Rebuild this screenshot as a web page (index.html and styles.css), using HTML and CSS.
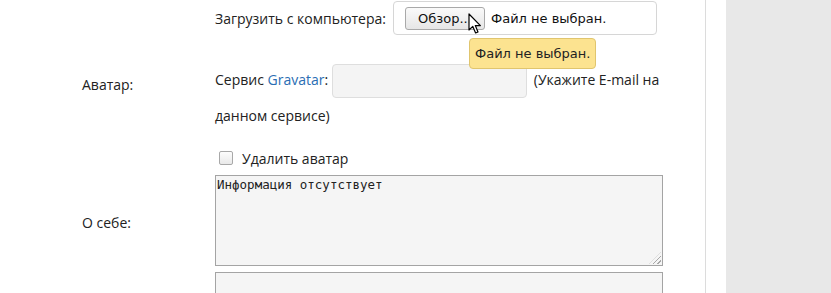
FILE: index.html
```html
<!DOCTYPE html>
<html lang="ru">
<head>
<meta charset="utf-8">
<link rel="stylesheet" href="styles.css">
</head>
<body>
<div class="page">
  <div class="main">
    <div class="form">
      <div class="label avatar-label">Аватар:</div>
      <div class="field avatar-field">
        <div class="upload-row">
          <span class="upload-text">Загрузить с компьютера:</span>
          <span class="file-box">
            <span class="file-btn">Обзор...</span>
            <span class="file-name">Файл не выбран.</span>
            <span class="tooltip">Файл не выбран.</span>
            <svg class="cursor" width="14" height="22" viewBox="0 0 14 22"><path d="M1 1 L1 17 L4.8 13.4 L7.6 20 L10 19 L7.3 12.6 L12.4 12.6 Z" fill="#fff" stroke="#000" stroke-width="1.2" stroke-linejoin="round"/></svg>
          </span>
        </div>
        <p class="gravatar">Сервис <a href="#" class="link">Gravatar</a>:<input class="text-input" type="text"> (Укажите E-mail на данном сервисе)</p>
        <label class="check-row"><span class="checkbox"></span>Удалить аватар</label>
      </div>
      <div class="label about-label">О себе:</div>
      <div class="field">
        <div class="textarea">Информация отсутствует<span class="grip"></span></div>
      </div>
      <div class="label"></div>
      <div class="field">
        <div class="textarea next"></div>
      </div>
    </div>
  </div>
  <div class="gap"></div>
  <div class="sidebar"></div>
</div>
</body>
</html>
```
FILE: styles.css
```css
html, body {
  margin: 0;
  padding: 0;
  background: #fff;
}
body {
  font-family: "Open Sans", "DejaVu Sans", sans-serif;
  font-size: 14px;
  color: #222;
  overflow: hidden;
  height: 293px;
}
.page {
  display: flex;
  height: 293px;
}
.main {
  width: 706px;
  border-right: 1px solid #dcdcdc;
  box-sizing: border-box;
}
.gap {
  width: 20px;
}
.sidebar {
  flex: 1;
  background: #e8e8e8;
}
.form {
  display: grid;
  grid-template-columns: 133px 452px;
  padding-left: 82px;
  padding-top: 1px;
}
.label {
  display: flex;
  align-items: center;
}
.avatar-label {
  padding-top: 1px;
}
.about-label {
  padding-top: 12px;
}
.upload-row {
  display: flex;
  align-items: center;
  height: 34px;
}
.upload-text {
  margin-right: 7px;
}
.file-box {
  position: relative;
  display: flex;
  align-items: center;
  width: 264px;
  height: 34px;
  box-sizing: border-box;
  border: 1px solid #d6d6d6;
  border-radius: 4px;
  padding-left: 11px;
  font-family: "DejaVu Sans", sans-serif;
  font-size: 13px;
  color: #111;
}
.file-btn {
  display: inline-flex;
  align-items: center;
  justify-content: center;
  width: 80px;
  height: 23px;
  box-sizing: border-box;
  border: 1px solid #a9a9a9;
  border-radius: 3px;
  background: linear-gradient(#fafafa, #e6e6e6);
  margin-right: 6px;
}
.tooltip {
  position: absolute;
  left: 75px;
  top: 36px;
  padding: 6px 5px;
  background: #fce390;
  border: 1px solid #e0c56e;
  border-radius: 4px;
  color: #222;
  white-space: nowrap;
  font-size: 13px;
  line-height: 17px;
  z-index: 2;
}
.cursor {
  position: absolute;
  left: 74px;
  top: 11px;
  z-index: 3;
}
.gravatar {
  margin: 27px 0 0 0;
  line-height: 35px;
}
.link {
  color: #2a6db3;
  text-decoration: none;
}
.text-input {
  width: 195px;
  height: 34px;
  box-sizing: border-box;
  border: 1px solid #dedede;
  border-radius: 4px;
  background: #f4f4f4;
  vertical-align: middle;
  margin: 0 3px 0 4px;
  padding: 0;
}
.check-row {
  display: flex;
  align-items: center;
  margin-top: 16px;
  padding-left: 4px;
  height: 18px;
}
.checkbox {
  width: 12px;
  height: 12px;
  border: 1px solid #a8a8a8;
  border-radius: 2px;
  background: linear-gradient(#fdfdfd, #e9e9e9);
  margin-right: 9px;
}
.textarea {
  position: relative;
  margin-top: 8px;
  width: 448px;
  height: 91px;
  box-sizing: border-box;
  border: 1px solid #a4a4a4;
  background: #f5f5f5;
  font-family: "DejaVu Sans Mono", monospace;
  font-size: 12.5px;
  line-height: 15px;
  padding: 1px 1px;
  color: #222;
}
.textarea.next {
  height: 40px;
  margin-top: 6px;
}
.grip {
  position: absolute;
  right: 1px;
  bottom: 1px;
  width: 12px;
  height: 12px;
  background: repeating-linear-gradient(135deg, transparent 0 2px, #a8a8a8 2px 3px);
  clip-path: polygon(100% 0, 100% 100%, 0 100%);
}
```
